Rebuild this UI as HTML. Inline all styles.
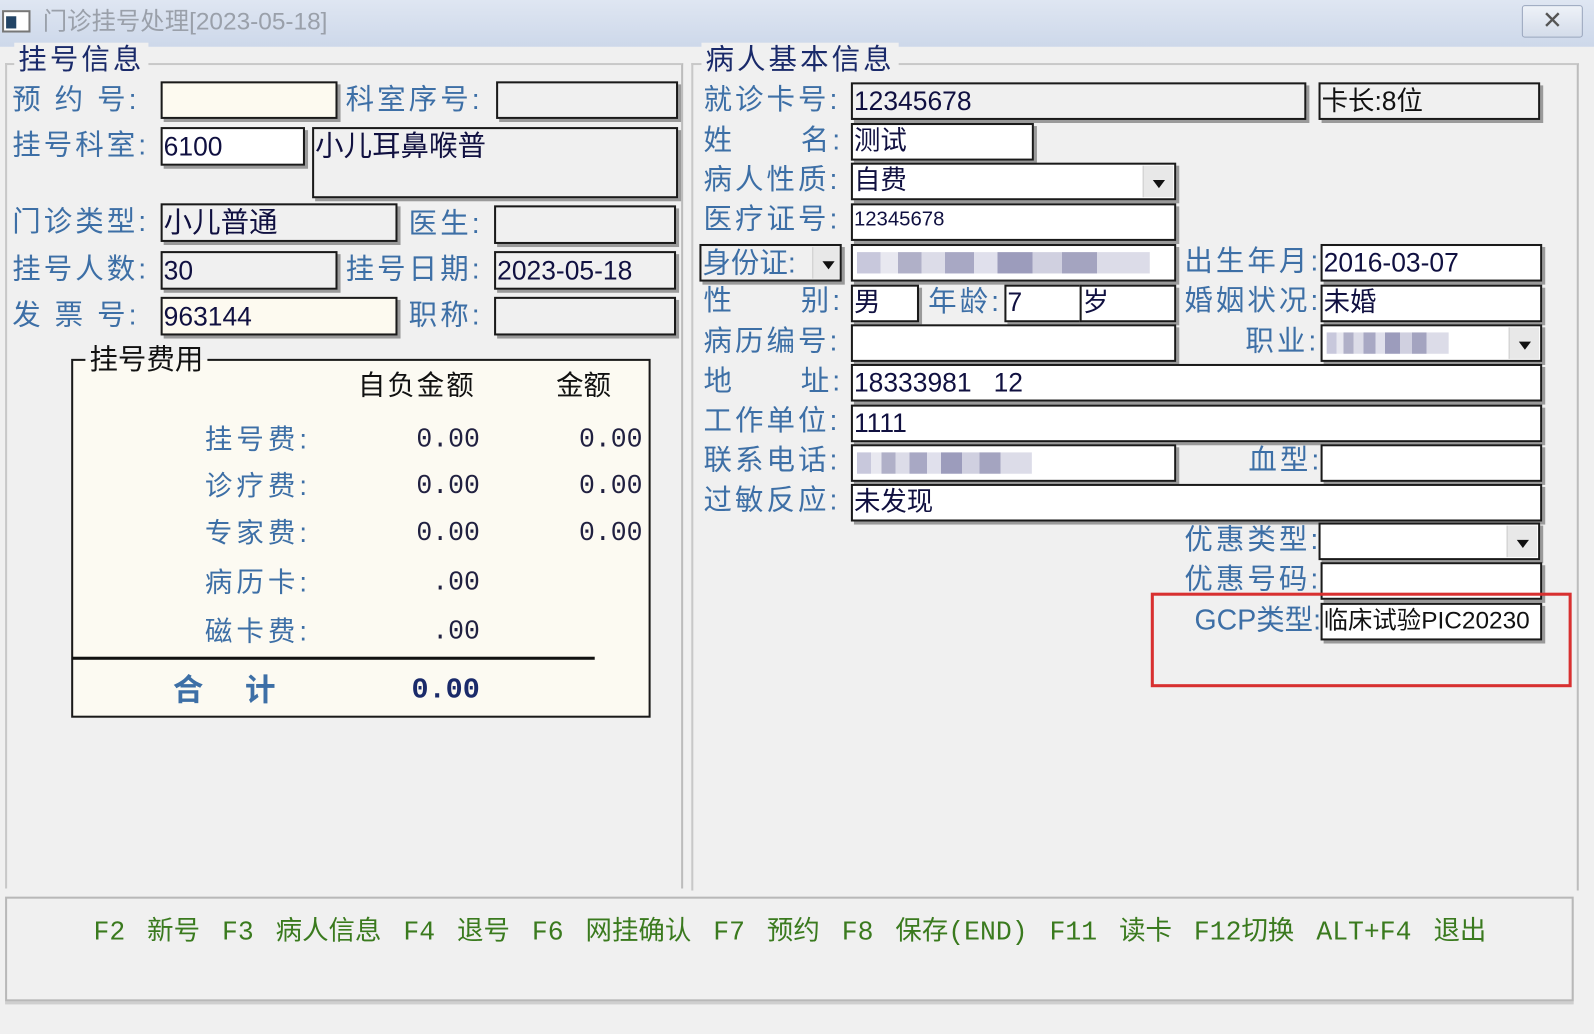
<!DOCTYPE html>
<html><head><meta charset="utf-8"><style>
html,body{margin:0;padding:0;background:#f0f0f0;overflow:hidden}
#w{position:absolute;left:0;top:0;width:1568px;height:1017px;transform:scale(1.0166);transform-origin:0 0;background:#f0f0f0;font-family:"Liberation Sans","Noto Sans CJK SC",sans-serif}
div{position:absolute;box-sizing:border-box;white-space:pre}
.l{font-size:28px;line-height:34px;color:#3d6fa6;letter-spacing:3px}
.b{border:2px solid #1a1a1a;box-shadow:3px 3px 0 #9a9a9a;background:#f0f0f0;font-size:26px;color:#101040;padding-left:1px;overflow:hidden;letter-spacing:0}
.w{background:#fff}.c{background:#fdfaf0}
.dd{position:absolute;right:1px;top:1px;bottom:1px;width:30px;background:#e8e8e8;border-left:1px solid #ccc}
.dd:after{content:"";position:absolute;left:9px;top:45%;border:6px solid transparent;border-top:8px solid #111}
.bl{position:absolute;top:6px;bottom:6px;left:4px;background:linear-gradient(90deg,#c8c8dc 0 8%,#e8e8f0 8% 14%,#b0b0c8 14% 22%,#dcdce8 22% 30%,#a8a8c4 30% 40%,#e0e0ec 40% 48%,#9c9cbc 48% 60%,#d0d0e0 60% 70%,#a4a4c0 70% 82%,#dcdce8 82%)}
.ft{font-size:27px;line-height:34px;color:#3d6fa6;text-align:right;letter-spacing:4px}
.fv{font-size:26px;line-height:34px;color:#202040;text-align:right;font-family:"Liberation Mono","Noto Sans CJK SC",monospace}
</style></head><body><div id="w">
<div style="left:0;top:0;width:1568px;height:46px;background:linear-gradient(#dfe6f2,#cdd8ea)"></div>
<div style="left:2px;top:10px;width:28px;height:22px;border:2px solid #777;background:#fff"><div style="left:2px;top:4px;width:10px;height:12px;background:#246"></div></div>
<div style="left:42px;top:6px;font-size:24px;line-height:32px;color:#9aa0aa">门诊挂号处理[2023-05-18]</div>
<div style="left:1497px;top:5px;width:60px;height:32px;border:1px solid #9aa6bd;border-radius:3px;background:linear-gradient(#eef2f8,#d4dcea);font-size:24px;line-height:30px;text-align:center;color:#555">✕</div>
<div style="left:5px;top:62px;width:667px;height:812px;border-top:2px solid #c8c8c8;border-left:2px solid #c8c8c8;border-right:2px solid #bcbcbc"></div>
<div style="left:680px;top:62px;width:873px;height:814px;border-top:2px solid #c8c8c8;border-left:2px solid #c8c8c8;border-right:2px solid #bcbcbc"></div>
<div class="l" style="left:14px;top:42px;color:#1a2a6a;background:#f0f0f0;padding:0 4px">挂号信息</div>
<div class="l" style="left:690px;top:42px;color:#1a2a6a;background:#f0f0f0;padding:0 4px">病人基本信息</div>
<div class="l" style="left:12px;top:81px">预 约 号:</div><div class="b c" style="left:158px;top:80px;width:174px;height:37px"></div>
<div class="l" style="left:340px;top:81px">科室序号:</div><div class="b" style="left:488px;top:80px;width:179px;height:37px"></div>
<div class="l" style="left:12px;top:126px">挂号科室:</div><div class="b w" style="left:158px;top:125px;width:142px;height:38px;line-height:34px">6100</div>
<div class="b" style="left:307px;top:125px;width:360px;height:70px;line-height:34px;font-size:28px">小儿耳鼻喉普</div>
<div class="l" style="left:12px;top:201px">门诊类型:</div><div class="b" style="left:158px;top:200px;width:233px;height:38px;line-height:34px;font-size:28px">小儿普通</div>
<div class="l" style="left:402px;top:203px">医生:</div><div class="b" style="left:486px;top:202px;width:179px;height:38px"></div>
<div class="l" style="left:12px;top:248px">挂号人数:</div><div class="b" style="left:158px;top:247px;width:174px;height:38px;line-height:34px">30</div>
<div class="l" style="left:340px;top:248px">挂号日期:</div><div class="b" style="left:486px;top:247px;width:179px;height:38px;line-height:34px">2023-05-18</div>
<div class="l" style="left:12px;top:293px">发 票 号:</div><div class="b c" style="left:158px;top:292px;width:233px;height:38px;line-height:34px">963144</div>
<div class="l" style="left:402px;top:293px">职称:</div><div class="b" style="left:486px;top:292px;width:179px;height:38px"></div>
<div style="left:70px;top:353px;width:570px;height:353px;border:2px solid #1a1a1a;background:#fcfaf2"></div>
<div style="left:84px;top:336px;font-size:28px;line-height:36px;color:#111;background:linear-gradient(#f0f0f0 50%,#fcfaf2 50%);padding:0 4px">挂号费用</div>
<div style="left:352px;top:362px;font-size:27px;line-height:34px;color:#111;letter-spacing:2px">自负金额</div>
<div style="left:547px;top:362px;font-size:27px;line-height:34px;color:#111">金额</div>
<div class="ft" style="left:180px;top:415px;width:126px">挂号费:</div><div class="fv" style="left:360px;top:415px;width:112px">0.00</div><div class="fv" style="left:520px;top:415px;width:112px">0.00</div>
<div class="ft" style="left:180px;top:461px;width:126px">诊疗费:</div><div class="fv" style="left:360px;top:461px;width:112px">0.00</div><div class="fv" style="left:520px;top:461px;width:112px">0.00</div>
<div class="ft" style="left:180px;top:507px;width:126px">专家费:</div><div class="fv" style="left:360px;top:507px;width:112px">0.00</div><div class="fv" style="left:520px;top:507px;width:112px">0.00</div>
<div class="ft" style="left:180px;top:556px;width:126px">病历卡:</div><div class="fv" style="left:360px;top:556px;width:112px">.00</div>
<div class="ft" style="left:180px;top:604px;width:126px">磁卡费:</div><div class="fv" style="left:360px;top:604px;width:112px">.00</div>
<div style="left:71px;top:646px;width:514px;height:3px;background:#111"></div>
<div style="left:170px;top:662px;font-size:30px;line-height:36px;color:#3d6fa6;font-weight:bold;letter-spacing:4px">合   计</div>
<div style="left:360px;top:662px;width:112px;text-align:right;font-size:28px;line-height:36px;color:#1a2a6a;font-weight:bold;font-family:'Liberation Mono',monospace">0.00</div>
<div class="l" style="left:692px;top:81px">就诊卡号:</div><div class="b" style="left:837px;top:81px;width:448px;height:37px;line-height:33px">12345678</div>
<div class="b" style="left:1297px;top:81px;width:218px;height:37px;line-height:33px;color:#111">卡长:8位</div>
<div class="l" style="left:692px;top:121px">姓      名:</div><div class="b w" style="left:837px;top:121px;width:180px;height:37px;line-height:31px">测试</div>
<div class="l" style="left:692px;top:160px">病人性质:</div><div class="b w" style="left:837px;top:160px;width:320px;height:37px;line-height:31px">自费<div class="dd"></div></div>
<div class="l" style="left:692px;top:199px">医疗证号:</div><div class="b w" style="left:837px;top:200px;width:320px;height:37px;line-height:28px;font-size:20px">12345678</div>
<div class="b" style="left:688px;top:240px;width:140px;height:37px;line-height:33px;font-size:28px;color:#3d6fa6">身份证:<div class="dd" style="width:26px"></div></div>
<div class="b w" style="left:837px;top:240px;width:320px;height:37px"><div class="bl" style="right:24px"></div></div>
<div class="l" style="left:1165px;top:240px">出生年月:</div><div class="b w" style="left:1299px;top:240px;width:218px;height:37px;line-height:33px">2016-03-07</div>
<div class="l" style="left:692px;top:279px">性      别:</div><div class="b w" style="left:837px;top:280px;width:67px;height:37px;line-height:31px">男</div>
<div class="l" style="left:913px;top:280px">年龄:</div><div class="b w" style="left:988px;top:280px;width:76px;height:37px;line-height:31px">7</div><div class="b w" style="left:1062px;top:280px;width:95px;height:37px;line-height:31px">岁</div>
<div class="l" style="left:1165px;top:279px">婚姻状况:</div><div class="b w" style="left:1299px;top:280px;width:218px;height:37px;line-height:31px">未婚</div>
<div class="l" style="left:692px;top:319px">病历编号:</div><div class="b w" style="left:837px;top:319px;width:320px;height:37px"></div>
<div class="l" style="left:1225px;top:319px">职业:</div><div class="b w" style="left:1299px;top:319px;width:218px;height:37px"><div class="bl" style="right:90px"></div><div class="dd"></div></div>
<div class="l" style="left:692px;top:358px">地      址:</div><div class="b w" style="left:837px;top:358px;width:680px;height:37px;line-height:33px">18333981   12</div>
<div class="l" style="left:692px;top:397px">工作单位:</div><div class="b w" style="left:837px;top:398px;width:680px;height:37px;line-height:33px">1111</div>
<div class="l" style="left:692px;top:436px">联系电话:</div><div class="b w" style="left:837px;top:437px;width:320px;height:37px"><div class="bl" style="right:140px"></div></div>
<div class="l" style="left:1228px;top:436px">血型:</div><div class="b w" style="left:1299px;top:437px;width:218px;height:37px"></div>
<div class="l" style="left:692px;top:475px">过敏反应:</div><div class="b w" style="left:837px;top:476px;width:680px;height:37px;line-height:31px">未发现</div>
<div class="l" style="left:1165px;top:514px">优惠类型:</div><div class="b w" style="left:1297px;top:514px;width:218px;height:37px"><div class="dd"></div></div>
<div class="l" style="left:1165px;top:553px">优惠号码:</div><div class="b w" style="left:1299px;top:553px;width:218px;height:37px"></div>
<div class="l" style="left:1175px;top:593px;letter-spacing:0">GCP类型:</div><div class="b w" style="left:1299px;top:593px;width:218px;height:37px;line-height:31px;font-size:24px;color:#111">临床试验PIC20230</div>
<div style="left:1132px;top:583px;width:414px;height:93px;border:3px solid #d83030"></div>
<div style="left:5px;top:882px;width:1543px;height:103px;border:2px solid #b8b8b8;box-shadow:0 3px 0 #cfcfcf;background:#f0f0f0"></div>
<div style="left:0px;top:898px;width:1554px;font-size:26px;line-height:38px;color:#3a7a1e;text-align:center;word-spacing:6px;font-family:'Liberation Mono','Noto Sans CJK SC',monospace">F2 新号 F3 病人信息 F4 退号 F6 网挂确认 F7 预约 F8 保存(END) F11 读卡 F12切换 ALT+F4 退出</div>
</div></body></html>
